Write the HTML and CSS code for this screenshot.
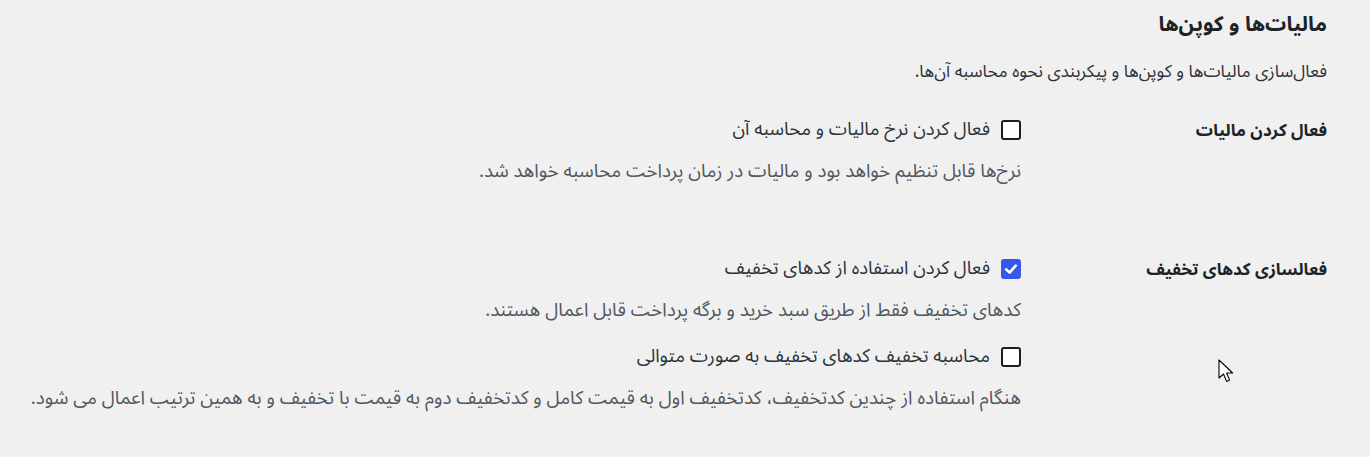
FILE: index.html
```html
<!DOCTYPE html>
<html lang="fa" dir="rtl">
<head>
<meta charset="utf-8">
<title>مالیات‌ها و کوپن‌ها</title>
<link rel="stylesheet" href="styles.css">
</head>
<body>
<div class="wrap">
  <h2 class="title">مالیات‌ها و کوپن‌ها</h2>
  <p class="intro">فعال‌سازی مالیات‌ها و کوپن‌ها و پیکربندی نحوه محاسبه آن‌ها.</p>

  <div class="row row-tax">
    <div class="th">فعال کردن مالیات</div>
    <div class="td">
      <label class="option"><span class="box"></span><span>فعال کردن نرخ مالیات و محاسبه آن</span></label>
      <p class="desc">نرخ‌ها قابل تنظیم خواهد بود و مالیات در زمان پرداخت محاسبه خواهد شد.</p>
    </div>
  </div>

  <div class="row row-coupon">
    <div class="th">فعالسازی کدهای تخفیف</div>
    <div class="td">
      <label class="option"><span class="box checked"><svg viewBox="0 0 20 20" width="20" height="20"><path d="M5.2 10.4 L8.6 13.6 L14.8 6.6" fill="none" stroke="#fff" stroke-width="2.6" stroke-linecap="round" stroke-linejoin="round"/></svg></span><span>فعال کردن استفاده از کدهای تخفیف</span></label>
      <p class="desc">کدهای تخفیف فقط از طریق سبد خرید و برگه پرداخت قابل اعمال هستند.</p>
      <label class="option option-seq"><span class="box"></span><span>محاسبه تخفیف کدهای تخفیف به صورت متوالی</span></label>
      <p class="desc">هنگام استفاده از چندین کدتخفیف، کدتخفیف اول به قیمت کامل و کدتخفیف دوم به قیمت با تخفیف و به همین ترتیب اعمال می شود.</p>
    </div>
  </div>
</div>
<svg class="cursor" viewBox="0 0 18 26" width="18" height="26"><path d="M1 1 L1 19 L5.5 15 L8.6 22.4 L11.6 21.1 L8.6 14 L14.6 14 Z" fill="#fff" stroke="#000" stroke-width="1.1" stroke-linejoin="round"/></svg>
</body>
</html>
```

FILE: styles.css
```css
html, body {
  margin: 0;
  padding: 0;
  background: #f0f0f1;
}
body {
  font-family: "Noto Sans Arabic", "DejaVu Sans", sans-serif;
  color: #1d2327;
  font-size: 16px;
  position: relative;
  height: 457px;
  overflow: hidden;
}
.wrap {
  padding: 10px 43px 0 0;
}
.title {
  margin: 0;
  font-size: 21px;
  line-height: 28px;
  font-weight: 700;
  color: #1d2327;
}
.intro {
  margin: 24px 0 0;
  font-size: 17.3px;
  line-height: 20px;
  color: #2c3338;
}
.row {
  display: grid;
  grid-template-columns: 306px 1fr;
}
.row-tax { margin-top: 38px; }
.row-coupon { margin-top: 78px; }
.th {
  font-weight: 700;
  font-size: 17px;
  line-height: 20px;
  color: #1d2327;
  padding-top: 1px;
}
.option {
  display: flex;
  align-items: center;
  gap: 11px;
  height: 20px;
  font-size: 18.5px;
  line-height: 20px;
  color: #2c3338;
}
.option-seq { margin-top: 27px; }
.box {
  width: 20px;
  height: 20px;
  box-sizing: border-box;
  border: 2px solid #1e1e1e;
  border-radius: 3px;
  background: #fff;
  flex: none;
  display: block;
}
.box.checked {
  background: #3858e9;
  border-color: #3858e9;
  position: relative;
}
.box.checked svg {
  display: block;
  margin: -2px;
}
.desc {
  margin: 21px 0 0;
  font-size: 18.75px;
  line-height: 20px;
  color: #50575e;
  white-space: nowrap;
}
.cursor {
  position: absolute;
  left: 1218px;
  top: 359px;
}
```
